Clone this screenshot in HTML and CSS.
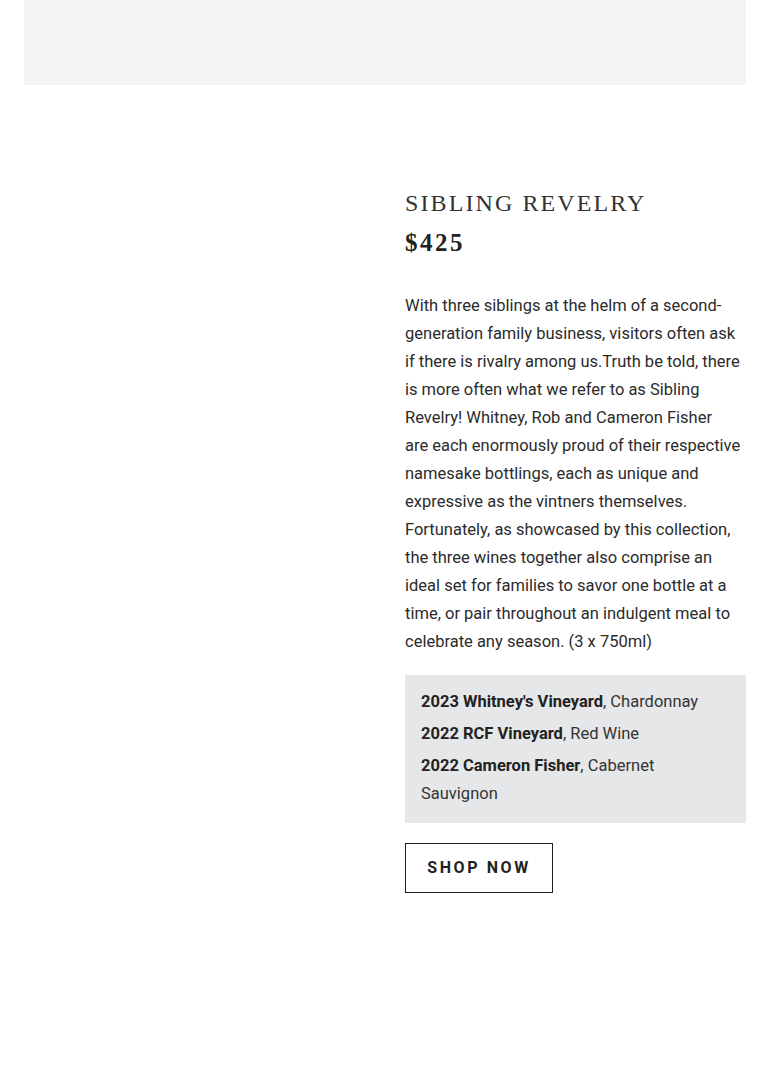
FILE: index.html
```html
<!DOCTYPE html>
<html>
<head>
<meta charset="utf-8">
<link rel="stylesheet" href="styles.css">
</head>
<body>
<div class="page">
  <div class="banner"></div>
  <section class="product">
    <div class="media"></div>
    <div class="info">
      <h1 class="title">Sibling Revelry</h1>
      <div class="price">$425</div>
      <p class="desc">With three siblings at the helm of a second-generation family business, visitors often ask if there is rivalry among us.Truth be told, there is more often what we refer to as Sibling Revelry! Whitney, Rob and Cameron Fisher are&nbsp;each enormously proud of their respective namesake bottlings, each as unique and expressive as the vintners themselves. Fortunately, as showcased by this collection, the three wines together also comprise an ideal set for families to savor one bottle at a time, or pair throughout an indulgent meal to celebrate any season. (3 x 750ml)</p>
      <ul class="wines">
        <li><strong>2023 Whitney's Vineyard</strong>, Chardonnay</li>
        <li><strong>2022 RCF Vineyard</strong>, Red Wine</li>
        <li><strong>2022 Cameron Fisher</strong>, Cabernet Sauvignon</li>
      </ul>
      <a class="btn" href="#">Shop Now</a>
    </div>
  </section>
</div>
</body>
</html>
```
FILE: styles.css
```css
html, body {
  margin: 0;
  padding: 0;
  background: #fff;
}
.page {
  padding: 0 24px;
}
.banner {
  height: 85px;
  background: #f5f4f2;
}
.product {
  display: grid;
  grid-template-columns: 1fr 1fr;
  column-gap: 40px;
  padding-top: 103px;
}
.info {
  color: #2b2b2b;
}
.title {
  margin: 0;
  font-family: "Liberation Serif", serif;
  font-weight: normal;
  font-size: 24px;
  line-height: 30px;
  letter-spacing: 2.1px;
  text-transform: uppercase;
  color: #333;
}
.price {
  margin-top: 10px;
  font-family: "Liberation Serif", serif;
  font-weight: bold;
  font-size: 25px;
  line-height: 30px;
  letter-spacing: 2.5px;
  color: #222;
}
.desc {
  margin: 34px 0 0;
  font-family: Roboto, "Liberation Sans", sans-serif;
  font-size: 16.5px;
  line-height: 28px;
  color: #2b2b2b;
}
.wines {
  list-style: none;
  margin: 19px 0 0;
  padding: 13px 16px 15px;
  background: #e6e7e8;
  font-family: Roboto, "Liberation Sans", sans-serif;
  font-size: 16.5px;
  line-height: 28px;
  color: #333;
}
.wines li + li {
  margin-top: 4px;
}
.wines strong {
  font-weight: bold;
  color: #222;
}
.btn {
  display: inline-block;
  margin-top: 20px;
  box-sizing: border-box;
  width: 148px;
  height: 50px;
  line-height: 48px;
  border: 1px solid #222;
  text-align: center;
  text-decoration: none;
  font-family: Roboto, "Liberation Sans", sans-serif;
  font-weight: bold;
  font-size: 16px;
  letter-spacing: 2.6px;
  text-transform: uppercase;
  color: #222;
}
```
